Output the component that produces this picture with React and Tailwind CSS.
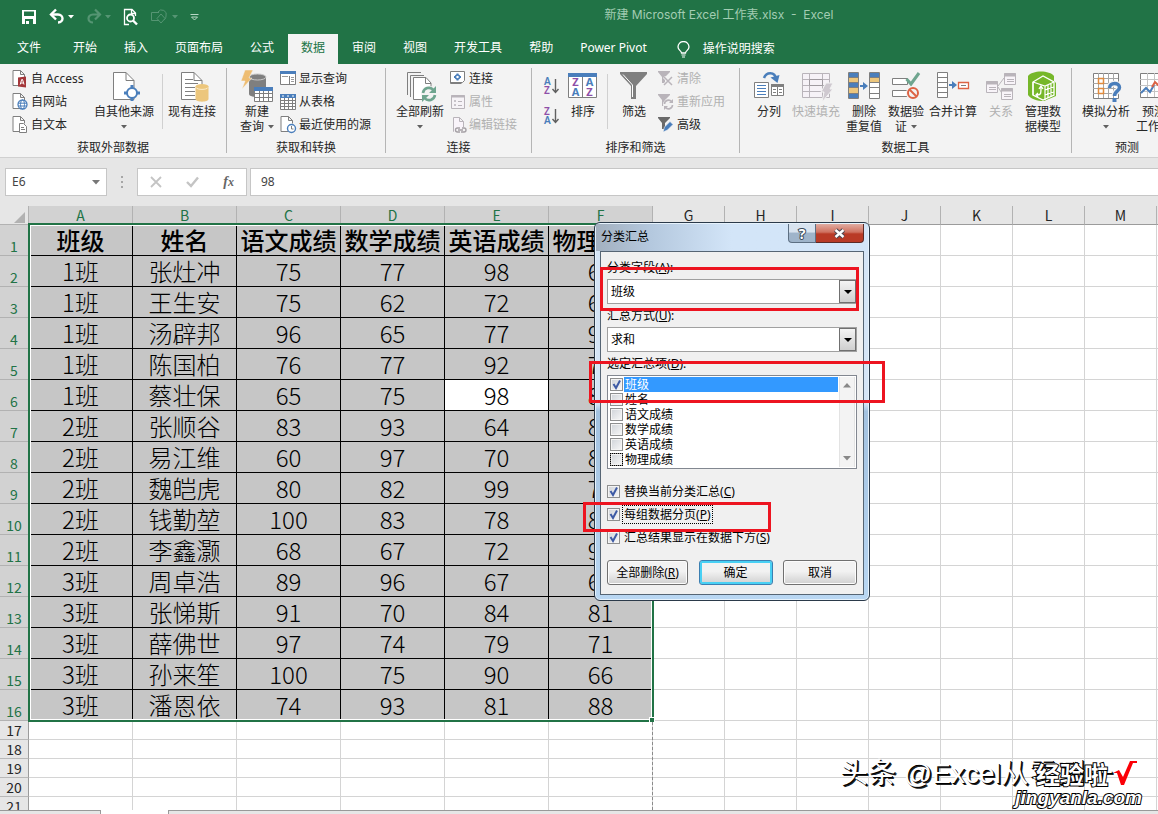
import { useState } from 'react';
import clsx from 'clsx';

const BLUE = '#4a7ebb';
const GRAY = '#7f7f7f';
const PALE = '#b9b4ba';
const SAND = '#ecc67c';
const GREEN = '#6fa58f';
const RED = '#dd6344';

const HEADERS = ['班级', '姓名', '语文成绩', '数学成绩', '英语成绩', '物理成绩'];

const ROWS = [
  ['1班', '张灶冲', 75, 77, 98, 66],
  ['1班', '王生安', 75, 62, 72, 62],
  ['1班', '汤辟邦', 96, 65, 77, 91],
  ['1班', '陈国柏', 76, 77, 92, 72],
  ['1班', '蔡壮保', 65, 75, 98, 81],
  ['2班', '张顺谷', 83, 93, 64, 81],
  ['2班', '易江维', 60, 97, 70, 83],
  ['2班', '魏皑虎', 80, 82, 99, 74],
  ['2班', '钱勤堃', 100, 83, 78, 84],
  ['2班', '李鑫灏', 68, 67, 72, 96],
  ['3班', '周卓浩', 89, 96, 67, 69],
  ['3班', '张悌斯', 91, 70, 84, 81],
  ['3班', '薛佛世', 97, 74, 79, 71],
  ['3班', '孙来笙', 100, 75, 90, 66],
  ['3班', '潘恩依', 74, 93, 81, 88],
];

const COLS = ['A', 'B', 'C', 'D', 'E', 'F', 'G', 'H', 'I', 'J', 'K', 'L', 'M', 'N'];
const TABS = ['开始', '插入', '页面布局', '公式', '数据', '审阅', '视图', '开发工具', '帮助', 'Power Pivot'];

/* ---------- icons ---------- */

function Big({ children }) {
  return (
    <svg width="32" height="32" viewBox="0 0 32 32" fill="none" className="shrink-0 overflow-visible">
      {children}
    </svg>
  );
}

function Small({ children }) {
  return (
    <svg width="16" height="16" viewBox="0 0 16 16" fill="none" className="shrink-0 overflow-visible">
      {children}
    </svg>
  );
}

function Caret({ className = 'text-[#606060]' }) {
  return (
    <svg width="6" height="4" viewBox="0 0 6 4" className={clsx('inline-block shrink-0', className)}>
      <path d="M0 0h6L3 3.5z" fill="currentColor" />
    </svg>
  );
}

function SmallDoc({ color = GRAY }) {
  return <path d="M8.5 14.5h-7.500v-15h7.500l4 4v3M8.500-.5v4h4" stroke={color} fill="#fff" />;
}

function BigDoc() {
  return (
    <>
      <path d="M5.5 1.5H18L26 9.5v19H5.5z" fill="#fff" stroke={GRAY} />
      <path d="M18 1.5v8h8" stroke={GRAY} />
    </>
  );
}

const icons = {
  access: (
    <Small>
      <SmallDoc />
      <path d="M6 6.500l8-1v11l-8-1z" fill="#a4373a" />
      <path d="M8.200 13.500l1.500-5h.8l1.500 5M9 12h2.500" stroke="#fff" />
    </Small>
  ),
  web: (
    <Small>
      <SmallDoc />
      <circle cx="10.500" cy="10.500" r="4.500" fill="#fff" stroke={BLUE} strokeWidth="1.300" />
      <ellipse cx="10.500" cy="10.500" rx="2" ry="4.500" stroke={BLUE} />
      <path d="M6 9.200h9M6 12h9" stroke={BLUE} />
    </Small>
  ),
  text: (
    <Small>
      <SmallDoc />
      <path d="M7.500 6.500h4l3 3v6h-7z" fill="#fff" stroke={GRAY} />
      <path d="M9 10.500h3M9 12.500h4" stroke={GRAY} />
    </Small>
  ),
  other: (
    <Big>
      <BigDoc />
      <path d="M24 14v16M16 22h16" stroke={BLUE} strokeWidth="3" />
      <circle cx="24" cy="22" r="5" fill="#fff" stroke={BLUE} strokeWidth="2" />
    </Big>
  ),
  existing: (
    <Big>
      <BigDoc />
      <path d="M9 8.500h8M9 12.500h13M9 16.500h10M9 20.500h10M9 24.500h10" stroke={GRAY} />
      <path d="M19.500 15.500v12.500c0 3.500 13 3.500 13 0V15.500z" fill={SAND} />
      <ellipse cx="26" cy="15.500" rx="6.500" ry="2.500" fill={SAND} />
      <path d="M20 16.500c1 2.500 11 2.500 12 0" stroke="#fbeccb" />
    </Big>
  ),
  newQuery: (
    <Big>
      <path d="M8 6v17c0 4 17 4 17 0V6z" fill={GRAY} />
      <ellipse cx="16.500" cy="6" rx="8.500" ry="3" fill={GRAY} stroke="#c8c8c8" />
      <path d="M4-1h8L8 7h3L1 18l3-8H0z" fill="#eebd72" stroke="#f3f3f3" strokeWidth=".5" />
      <path d="M13.500 16.500h18v14h-18z" fill="#fff" stroke={GRAY} />
      <path d="M13.500 22.500h18M13.500 26.500h18M18.500 20v10.500M22.500 20v10.500M27.500 20v10.500" stroke={GRAY} />
      <path d="M13 16h19v4H13z" fill={BLUE} />
    </Big>
  ),
  showQuery: (
    <Small>
      <path d="M.5.5h15v13H.5z" fill="#fff" stroke={GRAY} />
      <path d="M0 0h16v3H0z" fill={BLUE} />
      <path d="M9.500 5v8" stroke={GRAY} />
      <path d="M2 5.500h6M11 6.500h3M11 8.500h3M11 10.500h3" stroke="#9a9a9a" />
    </Small>
  ),
  fromTable: (
    <Small>
      <path d="M.5.5h15v15H.5z" fill="#fff" stroke={GRAY} />
      <path d="M0 6.500h16M0 9.500h16M0 12.500h16M4.500 4v12M8.500 4v12M12.500 4v12" stroke={GRAY} />
      <path d="M0 0h16v4H0z" fill={BLUE} />
      <path d="M2 2h2M7 2h2M12 2h2" stroke="#fff" />
    </Small>
  ),
  recent: (
    <Small>
      <SmallDoc />
      <circle cx="11.500" cy="11.500" r="4" fill="#fff" stroke={BLUE} strokeWidth="1.400" />
      <path d="M11.500 9v3h2" stroke={GRAY} />
    </Small>
  ),
  refreshAll: (
    <Big>
      <path d="M3.500 24V1.500H17M6.500 26V4.500H20" stroke={GRAY} />
      <path d="M9.500 6.500H22L27 12v16.500H9.500z" fill="#fff" stroke={GRAY} />
      <path d="M21.500 6.500v6H27" stroke={GRAY} />
      <circle cx="25" cy="23" r="8" fill="#f3f3f3" />
      <path d="M19 22a6 6 0 0110.500-3M31 24a6 6 0 01-10.500 3" stroke={GREEN} strokeWidth="2.600" />
      <path d="M32 15v7h-7zM18 31v-7h7z" fill={GREEN} />
    </Big>
  ),
  connection: (
    <Small>
      <path d="M.5.5h14v9l-2 2H.5z" fill="#fff" stroke={GRAY} />
      <path d="M.5 11v1.500h11" stroke={GRAY} />
      <path d="M7.500 2.500v7M4 6h7" stroke={BLUE} strokeWidth="2" />
      <circle cx="7.500" cy="6" r="2" fill="#fff" stroke={BLUE} strokeWidth="1.500" />
    </Small>
  ),
  props: (
    <Small>
      <path d="M1.500 1.500h13v13h-13z" fill="#f6f3f7" stroke={PALE} />
      <path d="M1 2.500h14" stroke={PALE} strokeWidth="2" />
      <path d="M8 7.500h4M8 11.500h4" stroke={PALE} />
      <path d="M4.500 6.500h1v1h-1zM4.500 10.500h1v1h-1z" stroke={PALE} />
    </Small>
  ),
  editLinks: (
    <Small>
      <path d="M4 14.500H3.500v-14h6l4 4V10M9.500.5v4h4" stroke={PALE} fill="#f9f4fa" />
      <path d="M10 11H7.500a2 2 0 000 4H10M12 11h2a2 2 0 010 4h-3M8 13h5" stroke="#a5a0a5" strokeWidth="1.400" />
    </Small>
  ),
  textToColumns: (
    <Big>
      <path d="M1.500 11.500h14v15h-14zM18.500 13.500h12v11h-12z" fill="#fff" stroke={GRAY} />
      <path d="M4 14.500h9M4 17.500h9M4 20.500h9M4 23.500h9" stroke={BLUE} />
      <path d="M18 14.500h13" stroke={GRAY} strokeWidth="3" />
      <path d="M20 18.500h3M26 18.500h3M20 21.500h3M26 21.500h3M24.500 16v9" stroke={GRAY} />
      <path d="M11 7c2-6 11-7 12 1" stroke={BLUE} strokeWidth="2.500" />
      <path d="M17.500 6.500L26.500 4l-2 8z" fill={BLUE} />
    </Big>
  ),
  flashFill: (
    <Big>
      <path d="M2.500 2.500h27v24h-27z" fill="#f6f2f7" stroke={PALE} />
      <path d="M2 8.500h27M2 14.500h27M2 20.500h27M9.500 2v24M22.500 2v24" stroke={PALE} />
      <path d="M9.500 8.500h13v6h-13z" fill="#f6f2f7" stroke="#9f9a9f" />
      <path d="M26 12h7l-3 6h3L22 31l2-10h-3z" fill="#cfc9d0" stroke="#f3f3f3" />
    </Big>
  ),
  removeDup: (
    <Big>
      <path d="M.5 1.500h10v26H.5zM21.500 1.500h10v26h-10z" fill="#fff" stroke={GRAY} />
      <path d="M1 2h9v5H1zM1 12h9v5H1zM1 22h9v5H1zM22 2h9v5h-9z" fill={BLUE} />
      <path d="M1 7h9v5H1zM1 17h9v5H1zM22 7h9v5h-9z" fill={SAND} />
      <path d="M.5 6.500h10M.5 11.500h10M.5 16.500h10M.5 22.500h10M21.500 6.500h10M21.500 11.500h10M21.500 16.500h10M21.500 22.500h10" stroke={GRAY} />
      <path d="M12 15h5" stroke={BLUE} strokeWidth="2" />
      <path d="M15 11l5 4-5 4z" fill={BLUE} />
    </Big>
  ),
  validation: (
    <Big>
      <path d="M2.500 7.500h15v6h-15zM2.500 19.500h15v6h-15z" fill="#fff" stroke={GRAY} />
      <path d="M16.500 8l4.500 5L29 2" stroke={GREEN} strokeWidth="3" />
      <circle cx="23" cy="22" r="7" fill="#f3f3f3" />
      <circle cx="23" cy="22" r="5" stroke={RED} strokeWidth="2" />
      <path d="M19.500 18.500l7 7" stroke={RED} strokeWidth="2" />
    </Big>
  ),
  consolidate: (
    <Big>
      <path d="M.5 1.500h10v25H.5zM.5 6.500h10M.5 11.500h10M.5 16.500h10M.5 21.500h10" fill="#fff" stroke={GRAY} />
      <path d="M12 14h5" stroke={BLUE} strokeWidth="2" />
      <path d="M15 10l5 4-5 4z" fill={BLUE} />
      <path d="M21.500 11.500h10v6h-10z" fill="#fff" stroke={RED} strokeWidth="1.300" />
      <path d="M24 14.500h5" stroke={GRAY} />
    </Big>
  ),
  relations: (
    <Big>
      <path d="M13 15l6-8M13 16l5 8" stroke={PALE} />
      <path d="M1.500 10.500h11v11h-11zM19.500 2.500h11v11h-11zM16.500 17.500h11v11h-11z" fill="#f8f4f9" stroke={PALE} />
      <path d="M1 12h12M19 4h12M16 19h12" stroke={PALE} strokeWidth="3" />
      <path d="M4 16.500h7M4 18.500h7M22 8.500h7M22 10.500h7M19 23.500h7M19 25.500h7" stroke={PALE} />
    </Big>
  ),
  dataModel: (
    <Big>
      <path d="M1 5c4-6 22-6 26 0v5l2 2v13l-12 5C10 30 4 28 1 24z" fill="#76b72a" />
      <path d="M6 11l10-6 11 6v13l-11 5-10-5z" stroke="#fff" strokeWidth="1.300" />
      <path d="M6 11l12 4 9-4M18 15v14M6 11v13M21 14v13M24 13v13M18 19l9-3M18 24l9-3" stroke="#fff" strokeWidth="1.200" />
      <path d="M10 24c4 0 4-1 4-8M12 18l2-3 2 3M11 22l-2 2 2 2" stroke="#fff" strokeWidth="1.300" />
    </Big>
  ),
  whatIf: (
    <Big>
      <path d="M3.500 2.500h25v25h-25z" fill="#fff" stroke={GRAY} />
      <path d="M3 7.500h25M3 12.500h25M3 17.500h25M3 22.500h25M8.500 2v25M13.500 2v25M18.500 2v25M23.500 2v25" stroke="#a6a6a6" />
      <path d="M8.500 7.500h5v5h-5zM8.500 17.500h5v5h-5z" stroke="#e08a3c" strokeWidth="1.500" />
      <path d="M19.500 17c0-6 10-6 10-.5 0 4-5 3.500-5 8.500" stroke="#f3f3f3" strokeWidth="6" />
      <path d="M19.500 17c0-6 10-6 10-.5 0 4-5 3.500-5 8.500" stroke={BLUE} strokeWidth="3.500" />
      <path d="M22.500 27h4v4h-4z" fill={BLUE} />
    </Big>
  ),
  forecast: (
    <Big>
      <path d="M2.500 2.500h27v24h-27z" fill="#fff" stroke={GRAY} />
      <path d="M2 8.500h27M2 14.500h27M2 20.500h27M9.500 2v24M16.500 2v24M23.500 2v24" stroke="#c4c4c4" />
      <path d="M3 22l5-5 4 4 4-7" stroke={BLUE} strokeWidth="2" />
      <path d="M14 16l3-5 3 3 8-7" stroke={RED} strokeWidth="2" />
    </Big>
  ),
  filter: (
    <Big>
      <path d="M2 1h27v2L18 15v13h-5V15L2 3z" fill={GRAY} />
      <path d="M5 3.500L14.500 14v12" stroke="#fff" />
    </Big>
  ),
  sort: (
    <Big>
      <path d="M1.500 2.500h28v24h-28zM15.500 5v21" fill="#fff" stroke={GRAY} />
      <path d="M1 2h29v4H1z" fill={BLUE} />
      <g fontSize="11" fontWeight="700" textAnchor="middle">
        <text x="8.500" y="15" fill="#8e4fa8">Z</text>
        <text x="8.500" y="25" fill={BLUE}>A</text>
        <text x="22.500" y="15" fill={BLUE}>A</text>
        <text x="22.500" y="25" fill="#8e4fa8">Z</text>
      </g>
    </Big>
  ),
  clear: (
    <Small>
      <path d="M0 0h12v1L7 6v6H4V6L0 1z" fill={PALE} />
      <path d="M6 6l8 8M14 6l-8 8" stroke="#f3f3f3" strokeWidth="3" />
      <path d="M6 6l8 8M14 6l-8 8" stroke={PALE} strokeWidth="1.500" />
    </Small>
  ),
  reapply: (
    <Small>
      <path d="M0 0h12v1L7 6v6H4V6L0 1z" fill={PALE} />
      <circle cx="10.500" cy="10.500" r="5.500" fill="#f3f3f3" />
      <path d="M6.500 10a4 4 0 017-2.500M14.500 11a4 4 0 01-7 2.500" stroke={PALE} strokeWidth="1.600" />
      <path d="M15 5v4h-4zM6 16v-4h4z" fill={PALE} />
    </Small>
  ),
  advanced: (
    <Small>
      <path d="M0 0h12v1L7 6v6H4V6L0 1z" fill="#6a6a6a" />
      <path d="M5 15l1.500-5L12 4.500l3 3L9.500 13z" fill={BLUE} stroke="#f3f3f3" strokeWidth=".6" />
    </Small>
  ),
};

function SortArrow({ top, bottom, topClass, bottomClass }) {
  return (
    <button type="button" aria-label={`${top}${bottom} 排序`} className="h-[30px] flex items-center">
      <svg width="16" height="18" viewBox="0 0 16 18" className="overflow-visible">
        <g fontSize="10" fontWeight="600">
          <text x="0" y="8" className={topClass}>{top}</text>
          <text x="0" y="17" className={bottomClass}>{bottom}</text>
        </g>
        <path d="M11.500 2v13M8.500 12l3 3.500 3-3.500" stroke="#606060" strokeWidth="1.400" fill="none" />
      </svg>
    </button>
  );
}

/* ---------- ribbon pieces ---------- */

function BigButton({ icon, lines, caret, width, disabled }) {
  return (
    <button
      type="button"
      disabled={disabled}
      className={clsx(
        'flex flex-col items-center pt-1 leading-[15px] whitespace-nowrap disabled:text-[#b1b1b1]',
        width
      )}
    >
      {icons[icon]}
      <span className="mt-px">{lines[0]}</span>
      <span className="flex h-[15px] items-center gap-1">
        {lines[1]}
        {caret && <Caret />}
      </span>
    </button>
  );
}

function SmallButton({ icon, label, disabled }) {
  return (
    <button
      type="button"
      disabled={disabled}
      className="flex h-[23px] items-center gap-[3px] whitespace-nowrap disabled:text-[#b1b1b1]"
    >
      {icons[icon]}
      <span>{label}</span>
    </button>
  );
}

function Group({ label, width, padding = 'pl-2', children }) {
  return (
    <>
      <section className={clsx('flex shrink-0 flex-col pt-[3px]', width)} aria-label={label}>
        <div className={clsx('flex h-[73px] items-start', padding)}>{children}</div>
        <div className="h-4 text-center leading-4">{label}</div>
      </section>
      <div className="my-1 w-px shrink-0 bg-[#b5b5b5]" />
    </>
  );
}

function Rule() {
  return <div className="mx-[3px] mt-[7px] h-[55px] w-px shrink-0 bg-[#d0d0d0]" />;
}

function Ribbon() {
  return (
    <div className="flex h-[94px] overflow-hidden border-b border-[#d0d0d0] bg-[#f3f3f3] text-[#262626]">
      <Group label="获取外部数据" width="w-[226px]" padding="pl-3">
        <div className="w-[77px]">
          <SmallButton icon="access" label="自 Access" />
          <SmallButton icon="web" label="自网站" />
          <SmallButton icon="text" label="自文本" />
        </div>
        <BigButton icon="other" lines={['自其他来源']} caret width="w-[70px]" />
        <Rule />
        <BigButton icon="existing" lines={['现有连接']} width="w-[52px]" />
      </Group>

      <Group label="获取和转换" width="w-[158px]">
        <BigButton icon="newQuery" lines={['新建', '查询']} caret width="w-[44px]" />
        <div className="pl-px">
          <SmallButton icon="showQuery" label="显示查询" />
          <SmallButton icon="fromTable" label="从表格" />
          <SmallButton icon="recent" label="最近使用的源" />
        </div>
      </Group>

      <Group label="连接" width="w-[145px]">
        <BigButton icon="refreshAll" lines={['全部刷新']} caret width="w-[52px]" />
        <div className="pl-1">
          <SmallButton icon="connection" label="连接" />
          <SmallButton icon="props" label="属性" disabled />
          <SmallButton icon="editLinks" label="编辑链接" disabled />
        </div>
      </Group>

      <Group label="排序和筛选" width="w-[207px]" padding="pl-3">
        <div className="flex w-[18px] flex-col pt-1">
          <SortArrow top="A" bottom="Z" topClass="fill-[#4a7ebb]" bottomClass="fill-[#8e4fa8]" />
          <SortArrow top="Z" bottom="A" topClass="fill-[#8e4fa8]" bottomClass="fill-[#4a7ebb]" />
        </div>
        <BigButton icon="sort" lines={['排序']} width="w-[42px]" />
        <Rule />
        <BigButton icon="filter" lines={['筛选']} width="w-[46px]" />
        <div className="pl-px">
          <SmallButton icon="clear" label="清除" disabled />
          <SmallButton icon="reapply" label="重新应用" disabled />
          <SmallButton icon="advanced" label="高级" />
        </div>
      </Group>

      <Group label="数据工具" width="w-[331px]">
        <BigButton icon="textToColumns" lines={['分列']} width="w-[42px]" />
        <BigButton icon="flashFill" lines={['快速填充']} width="w-[52px]" disabled />
        <BigButton icon="removeDup" lines={['删除', '重复值']} width="w-[44px]" />
        <BigButton icon="validation" lines={['数据验', '证']} caret width="w-[40px]" />
        <BigButton icon="consolidate" lines={['合并计算']} width="w-[54px]" />
        <BigButton icon="relations" lines={['关系']} width="w-[42px]" disabled />
        <BigButton icon="dataModel" lines={['管理数', '据模型']} width="w-[42px]" />
      </Group>

      <Group label="预测" width="w-[110px]">
        <BigButton icon="whatIf" lines={['模拟分析']} caret width="w-[52px]" />
        <BigButton icon="forecast" lines={['预测', '工作表']} width="w-[44px]" />
      </Group>
    </div>
  );
}

function QuickAccess() {
  return (
    <div className="flex w-[280px] shrink-0 items-center gap-3 pl-[21px] text-white">
      <button type="button" aria-label="保存">
        <Small>
          <path d="M1 1h14v14H1z" fill="#fff" />
          <path d="M3 2.500h10v4.500H3zM4 10h8v5H4z" fill="#217346" />
          <path d="M5 12h3v3H5z" fill="#fff" />
        </Small>
      </button>
      <button type="button" aria-label="撤消" className="flex items-center gap-[3px]">
        <Small>
          <path d="M2 5.500h7c6 0 6 8 0 8" stroke="#fff" strokeWidth="2.400" />
          <path d="M7 .5l-5 5 5 5" stroke="#fff" strokeWidth="2.400" />
        </Small>
        <Caret className="text-white" />
      </button>
      <button type="button" aria-label="恢复" disabled className="flex items-center gap-[3px]">
        <Small>
          <path d="M14 5.500H7c-6 0-6 8 0 8M9 .5l5 5-5 5" stroke="#559573" strokeWidth="2.200" />
        </Small>
        <Caret className="text-[#559573]" />
      </button>
      <button type="button" aria-label="打印预览">
        <Small>
          <path d="M6 15.500H1.500v-15H9L12.500 4v3M8.500.5v4h4" stroke="#fff" strokeWidth="1.300" />
          <circle cx="7.500" cy="9" r="3.500" stroke="#fff" strokeWidth="1.800" />
          <path d="M10 11.500l4 4" stroke="#fff" strokeWidth="2.400" />
        </Small>
      </button>
      <button type="button" aria-label="形状" disabled className="flex items-center gap-[5px]">
        <Small>
          <path d="M8 11.500H.5v-8H8M7 3a4.500 4.500 0 018 4c0 2-1 3-2 4" stroke="#559573" />
          <path d="M10 5l4 4.500-4 4.500-4-4.500z" stroke="#559573" />
        </Small>
        <Caret className="text-[#559573]" />
      </button>
      <button type="button" aria-label="自定义快速访问工具栏">
        <svg width="9" height="7" viewBox="0 0 9 7" fill="none">
          <path d="M.5.5h8M1.500 3h6l-3 3z" stroke="#b9d8c6" />
        </svg>
      </button>
    </div>
  );
}

function FormulaBar() {
  const box = 'flex h-7 items-center border border-[#c6c6c6] bg-white';
  return (
    <div className="flex h-12 items-start bg-[#e6e6e6] pt-[10px] pl-[5px] text-[#444]">
      <div className={clsx(box, 'w-[102px] shrink-0 pr-[6px]')}>
        <input aria-label="名称框" defaultValue="E6" className="w-full min-w-0 bg-transparent pl-[6px] outline-none" />
        <svg width="8" height="5" viewBox="0 0 8 5" className="shrink-0">
          <path d="M0 0h8L4 4.500z" fill="#777" />
        </svg>
      </div>
      <div className="flex h-7 w-[30px] shrink-0 flex-col items-center justify-center gap-[3px]">
        <i className="size-[2px] bg-[#a6a6a6]" />
        <i className="size-[2px] bg-[#a6a6a6]" />
        <i className="size-[2px] bg-[#a6a6a6]" />
      </div>
      <div className={clsx(box, 'w-[110px] shrink-0 justify-between px-3')}>
        <button type="button" aria-label="取消输入">
          <svg width="12" height="12" viewBox="0 0 12 12"><path d="M1 1l10 10M11 1L1 11" stroke="#c4c4c4" strokeWidth="1.800" /></svg>
        </button>
        <button type="button" aria-label="输入">
          <svg width="13" height="12" viewBox="0 0 13 12" fill="none"><path d="M1 6l4 4 7-8.500" stroke="#c4c4c4" strokeWidth="2.400" /></svg>
        </button>
        <button type="button" className="pb-px font-['Liberation_Serif',serif] text-[14px] leading-none font-bold text-[#666] italic">
          f<span className="text-[12px]">x</span>
        </button>
      </div>
      <div className={clsx(box, 'ml-[3px] flex-1 border-r-0')}>
        <input aria-label="编辑栏" defaultValue="98" className="w-full bg-transparent pl-[10px] outline-none" />
      </div>
    </div>
  );
}

/* ---------- worksheet ---------- */

function RowHead({ n, selected }) {
  return (
    <th
      scope="row"
      className={clsx(
        'border-r border-b p-0 align-bottom text-[14px] font-normal',
        selected
          ? 'border-[#b2b2b2] bg-[#d2d2d2] leading-[17px] text-[#217346]'
          : 'border-r-[#9b9b9b] border-b-[#b8b8b8] bg-[#e6e6e6] leading-[18px] text-[#262626]'
      )}
    >
      {n}
    </th>
  );
}

function Blanks({ from }) {
  return COLS.slice(from).map((c) => <td key={c} className="border-r border-b border-[#d4d4d4] p-0" />);
}

function Sheet() {
  const data = 'overflow-hidden border-r border-b border-black p-0 text-center text-[24px] leading-[30px] whitespace-nowrap text-black';
  return (
    <table className="w-[1317px] table-fixed border-separate border-spacing-0 bg-white font-['Noto_Sans_CJK_SC',sans-serif]">
      <colgroup>
        <col className="w-[29px]" />
        {COLS.map((c, i) => (
          <col key={c} className={i < 6 ? 'w-[104px]' : 'w-[72px]'} />
        ))}
        <col />
      </colgroup>
      <thead>
        <tr className="h-[19px]">
          <th aria-label="全选" className="border-r border-b border-[#b2b2b2] bg-[#e6e6e6] p-0">
            <svg width="11" height="11" viewBox="0 0 11 11" className="ml-auto mr-[3px] mt-1">
              <path d="M11 0v11H0z" fill="#b2b2b2" />
            </svg>
          </th>
          {COLS.map((c, i) => (
            <th
              key={c}
              scope="col"
              className={clsx(
                'border-r border-b border-r-[#b2b2b2] border-b-[#9b9b9b] p-0 text-[14px] leading-[18px] font-normal',
                i < 6 ? 'bg-[#d2d2d2] text-[#217346]' : 'bg-[#e6e6e6] text-[#262626]'
              )}
            >
              {c}
            </th>
          ))}
        </tr>
      </thead>
      <tbody>
        <tr className="h-[31px]">
          <RowHead n={1} selected />
          {HEADERS.map((h) => (
            <td key={h} className={clsx(data, 'bg-[#c6c6c6] font-medium')}>{h}</td>
          ))}
          <Blanks from={6} />
        </tr>
        {ROWS.map((row, r) => (
          <tr key={row[1]} className="h-[31px]">
            <RowHead n={r + 2} selected />
            {row.map((v, c) => (
              <td key={c} className={clsx(data, 'font-light', r === 4 && c === 4 ? 'bg-white' : 'bg-[#c6c6c6]')}>
                {v}
              </td>
            ))}
            <Blanks from={6} />
          </tr>
        ))}
        {[17, 18, 19, 20, 21].map((n) => (
          <tr key={n} className="h-[19px]">
            <RowHead n={n} />
            <Blanks from={0} />
          </tr>
        ))}
      </tbody>
    </table>
  );
}

/* ---------- subtotal dialog ---------- */

function Key({ children }) {
  return <>(<u>{children}</u>)</>;
}

function Combo({ id, value }) {
  return (
    <div className="relative mt-[3px] h-[25px] border border-[#a0a0a0] bg-white">
      <select id={id} defaultValue={value} className="h-full w-full appearance-none bg-transparent pl-[3px] outline-none">
        <option>{value}</option>
      </select>
      <span className="pointer-events-none absolute inset-y-0 right-0 flex w-[17px] items-center justify-center border border-[#707070] bg-linear-to-b from-[#f4f4f4] to-[#cfcfcf]">
        <svg width="8" height="4" viewBox="0 0 8 4"><path d="M0 0h8L4 4z" fill="#000" /></svg>
      </span>
    </div>
  );
}

function Tick({ checked, onChange }) {
  return (
    <span className="grid size-[13px] shrink-0">
      <input
        type="checkbox"
        checked={checked}
        onChange={onChange}
        className="peer col-start-1 row-start-1 size-[13px] appearance-none border border-[#8e8f8f] bg-linear-to-br from-[#cfd3d8] to-[#f8f8f8] shadow-[inset_0_0_0_1px_#f4f4f4]"
      />
      <svg viewBox="0 0 13 13" fill="none" className="pointer-events-none invisible col-start-1 row-start-1 peer-checked:visible">
        <path d="M3.500 6l2.500 4 4-7.500" stroke="#3d5aa5" strokeWidth="2" />
      </svg>
    </span>
  );
}

function PushButton({ type = 'button', width, primary, children }) {
  return (
    <button
      type={type}
      className={clsx(
        'h-[25px] rounded-[3px] border bg-linear-to-b from-[#f2f2f2] from-45% to-[#d0d0d0]',
        primary
          ? 'border-[#3c7fb1] shadow-[inset_0_0_0_2px_#48d0f4]'
          : 'border-[#707070] shadow-[inset_0_0_0_1px_#fcfcfc]',
        width
      )}
    >
      {children}
    </button>
  );
}

function SubtotalDialog() {
  const [fields, setFields] = useState(['班级']);
  const [opts, setOpts] = useState({ C: true, P: true, S: true });

  const toggleField = (f) =>
    setFields((p) => (p.includes(f) ? p.filter((x) => x !== f) : [...p, f]));
  const toggleOpt = (k) => setOpts((p) => ({ ...p, [k]: !p[k] }));

  return (
    <div
      role="dialog"
      aria-label="分类汇总"
      className="overflow-hidden rounded-[6px] border border-[#2b3a4a] bg-linear-to-b from-[#d5e5f6] from-48% via-[#a3c2e0] via-50% to-[#b9d7f3] px-[5px] pb-[5px] text-black shadow-[inset_0_0_0_1px_#e6f2fc]"
    >
      <div className="-mx-1 mt-px flex h-[27px] items-start bg-linear-to-r from-[#a3b0bf] via-[#b4c8de] via-20% to-[#d3e5f8] to-50% px-1">
        <span className="flex-1 pt-[5px] pl-px leading-4">分类汇总</span>
        <button
          type="button"
          aria-label="帮助"
          className="h-[19px] w-[28px] rounded-bl-[4px] border border-t-0 border-[#5d6f82] bg-linear-to-b from-[#d8e3ef] from-45% to-[#9fb4ca] to-50% text-[14px] leading-[17px] font-bold text-white [-webkit-text-stroke:2px_#3b4a5a] [paint-order:stroke]"
        >
          ?
        </button>
        <button
          type="button"
          aria-label="关闭"
          className="flex h-[19px] w-12 items-center justify-center rounded-br-[4px] border border-t-0 border-l-0 border-[#5c2a26] bg-linear-to-b from-[#e0aca2] via-[#cf7160] via-45% to-[#b93a26] to-55%"
        >
          <svg width="13" height="11" viewBox="0 0 13 11">
            <path d="M2.500 2l8 7M10.500 2l-8 7" stroke="#4c4650" strokeWidth="4.500" />
            <path d="M2.500 2l8 7M10.500 2l-8 7" stroke="#fff" strokeWidth="2.400" />
          </svg>
        </button>
      </div>

      <form className="border border-[#566574] bg-[#f0f0f0] px-[6px] pt-2 pb-[9px]" onSubmit={(e) => e.preventDefault()}>
        <label htmlFor="group-by" className="block h-4 leading-4">分类字段<Key>A</Key>:</label>
        <Combo id="group-by" value="班级" />
        <label htmlFor="method" className="mt-1 block h-4 leading-4">汇总方式<Key>U</Key>:</label>
        <Combo id="method" value="求和" />

        <div className="mt-1 h-4 leading-4">选定汇总项<Key>D</Key>:</div>
        <div className="mt-[3px] flex h-[94px] border border-[#828790] bg-white p-px">
          <div className="flex-1">
            {HEADERS.map((f) => (
              <label key={f} className="flex h-[15px] items-center gap-px pl-px leading-[15px]">
                <span className={clsx(f === '物理成绩' && 'outline-1 -outline-offset-1 outline-dotted outline-black')}>
                  <Tick checked={fields.includes(f)} onChange={() => toggleField(f)} />
                </span>
                <span className={clsx('h-[15px] flex-1 pl-px', f === '班级' && 'bg-[#3399ff] text-white')}>{f}</span>
              </label>
            ))}
          </div>
          <div className="ml-px flex w-4 flex-col items-center justify-between border-x border-[#e3e3e3] bg-[#f3f3f3] py-[6px]">
            <svg width="8" height="5" viewBox="0 0 8 5"><path d="M0 4.500h8L4 0z" fill="#888" /></svg>
            <svg width="8" height="5" viewBox="0 0 8 5"><path d="M0 0h8L4 4.500z" fill="#888" /></svg>
          </div>
        </div>

        <div className="mt-[11px]">
          {[
            ['C', '替换当前分类汇总'],
            ['P', '每组数据分页'],
            ['S', '汇总结果显示在数据下方'],
          ].map(([k, text]) => (
            <label key={k} className="flex h-[23px] items-center gap-[3px] whitespace-nowrap">
              <Tick checked={opts[k]} onChange={() => toggleOpt(k)} />
              <span className={clsx('px-px leading-[17px]', k === 'P' && 'outline-1 outline-dotted outline-black')}>
                {text}
                <Key>{k}</Key>
              </span>
            </label>
          ))}
        </div>

        <div className="mt-[11px] flex justify-between">
          <PushButton width="w-[81px]">全部删除<Key>R</Key></PushButton>
          <PushButton type="submit" width="w-[74px]" primary>确定</PushButton>
          <PushButton width="w-[74px]">取消</PushButton>
        </div>
      </form>
    </div>
  );
}

function Watermark() {
  return (
    <div className="pointer-events-none absolute right-[16px] bottom-0 h-[52px] w-[302px]">
      <div className="font-['Liberation_Sans','Noto_Sans_CJK_SC',sans-serif] text-[28px] leading-[32px] whitespace-nowrap text-white [text-shadow:1px_1px_0_#000,2px_2px_0_#222]">
        头条 @Excel从零到一
      </div>
      <div className="absolute top-[2px] right-[34px] font-['Noto_Sans_CJK_SC',sans-serif] text-[24px] leading-7 font-bold text-white [-webkit-text-stroke:2px_#000] [paint-order:stroke]">
        经验啦
      </div>
      <svg width="24" height="25" viewBox="0 0 24 25" className="absolute top-[2px] right-[5px]">
        <path d="M0 13l6-3 4 7L17 1h7v2h-4L11 25H8L4 13z" fill="#fb0007" />
      </svg>
      <div className="absolute right-0 bottom-0 font-['Liberation_Sans',sans-serif] text-[19px] leading-6 font-bold text-white italic [-webkit-text-stroke:2px_#000] [paint-order:stroke]">
        jingyanla.com
      </div>
    </div>
  );
}

export default function App() {
  const mark = 'pointer-events-none absolute border-[3px] border-[#ed1420]';
  return (
    <div className="flex h-screen flex-col overflow-hidden bg-white font-['Noto_Sans','Noto_Sans_CJK_SC',sans-serif] text-[12px] leading-4">
      <header className="bg-[#217346] text-white">
        <div className="flex h-[34px]">
          <QuickAccess />
          <h1 className="flex-1 pt-[7px] text-center font-['Inter','Noto_Sans_CJK_SC',sans-serif] whitespace-pre text-[#a3cdb3]">
            {'新建 Microsoft Excel 工作表.xlsx  -  Excel'}
          </h1>
        </div>
        <nav className="flex h-[30px]">
          <button type="button" className="w-[58px] shrink-0 pb-[2px]">文件</button>
          <div className="ml-[2px] flex gap-px">
            {TABS.map((t) => (
              <button
                key={t}
                type="button"
                className={clsx('px-[13px] pb-[2px] whitespace-nowrap', t === '数据' && 'bg-[#f3f3f3] text-[#217346]')}
              >
                {t}
              </button>
            ))}
          </div>
          <button type="button" className="ml-[17px] flex items-center gap-[13px] whitespace-nowrap">
            <svg width="13" height="17" viewBox="0 0 13 17" fill="none" stroke="#fff">
              <path d="M4.500 12c0-2-3.500-3-3.500-6a5.500 5.500 0 0111 0c0 3-3.500 4-3.500 6z" strokeWidth="1.300" />
              <path d="M4.500 14h4M5 16h3" />
            </svg>
            操作说明搜索
          </button>
        </nav>
      </header>

      <Ribbon />
      <FormulaBar />

      <main className="relative min-h-0 flex-1">
        <div className="h-full overflow-hidden">
          <Sheet />
        </div>

        {/* selection frame around A1:F16, with its fill handle */}
        <div className="pointer-events-none absolute top-[17px] left-[28px] h-[499px] w-[626px] border-2 border-[#217346] shadow-[inset_0_0_0_1px_#fff]">
          <i className="absolute -right-[3px] -bottom-[3px] size-[6px] border border-white bg-[#217346]" />
        </div>
        {/* page break */}
        <div className="absolute top-[516px] bottom-0 left-[652px] border-l border-dashed border-[#8a8a8a]" />

        <div className="absolute top-4 left-[594px] w-[276px]">
          <SubtotalDialog />
          <div className={clsx(mark, 'top-[45px] left-[6px] h-[44px] w-[259px]')} />
          <div className={clsx(mark, 'top-[139px] -left-[5px] h-[42px] w-[296px]')} />
          <div className={clsx(mark, 'top-[280px] -left-[11px] h-[30px] w-[188px]')} />
        </div>

        <Watermark />
      </main>

      <footer className="flex h-1 shrink-0">
        <div className="w-[101px] border-t border-r border-[#999] bg-[#e6e6e6]" />
        <div className="w-[67px] bg-white" />
        <div className="flex-1 border-t border-l border-[#999] bg-[#e6e6e6]" />
      </footer>
    </div>
  );
}
